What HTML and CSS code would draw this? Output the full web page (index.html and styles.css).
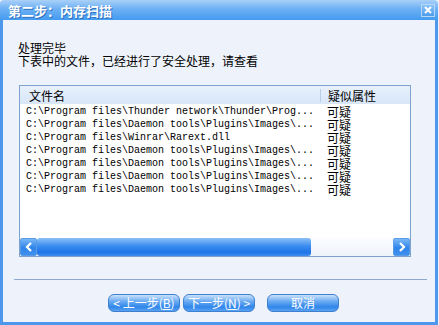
FILE: index.html
```html
<!DOCTYPE html>
<html lang="zh-CN">
<head>
  <meta charset="UTF-8">
  <title>第二步：内存扫描</title>
  <link rel="stylesheet" href="styles.css">
</head>
<body>
  <div class="window">
    <div class="titlebar">
      <span class="title">第二步：内存扫描</span>
      <span class="close-btn">
        <svg width="8" height="8" viewBox="0 0 8 8"><path d="M1 1L7 7M7 1L1 7" stroke="#fff" stroke-width="2"/></svg>
      </span>
    </div>

    <div class="content">
      <div class="message">
        <p>处理完毕</p>
        <p>下表中的文件，已经进行了安全处理，请查看</p>
      </div>

      <!-- 文件列表 -->
      <div class="list">
        <div class="list-head">
          <span class="col-name">文件名</span>
          <span class="col-attr">疑似属性</span>
        </div>
        <div class="rows">
          <div class="row"><span class="path">C:\Program files\Thunder network\Thunder\Prog...</span><span class="attr">可疑</span></div>
          <div class="row"><span class="path">C:\Program files\Daemon tools\Plugins\Images\...</span><span class="attr">可疑</span></div>
          <div class="row"><span class="path">C:\Program files\Winrar\Rarext.dll</span><span class="attr">可疑</span></div>
          <div class="row"><span class="path">C:\Program files\Daemon tools\Plugins\Images\...</span><span class="attr">可疑</span></div>
          <div class="row"><span class="path">C:\Program files\Daemon tools\Plugins\Images\...</span><span class="attr">可疑</span></div>
          <div class="row"><span class="path">C:\Program files\Daemon tools\Plugins\Images\...</span><span class="attr">可疑</span></div>
          <div class="row"><span class="path">C:\Program files\Daemon tools\Plugins\Images\...</span><span class="attr">可疑</span></div>
        </div>
        <div class="hscroll">
          <span class="scroll-btn">
            <svg width="8" height="10" viewBox="0 0 8 10"><path d="M6 1L2 5L6 9" stroke="#fff" stroke-width="2.2" fill="none"/></svg>
          </span>
          <span class="scroll-thumb"></span>
          <span class="scroll-track"></span>
          <span class="scroll-btn">
            <svg width="8" height="10" viewBox="0 0 8 10"><path d="M2 1L6 5L2 9" stroke="#fff" stroke-width="2.2" fill="none"/></svg>
          </span>
        </div>
      </div>

      <div class="separator"></div>

      <div class="buttons">
        <button class="btn">&lt; 上一步(<u>B</u>)</button>
        <button class="btn">下一步(<u>N</u>) &gt;</button>
        <button class="btn btn-cancel">取消</button>
      </div>
    </div>
  </div>
</body>
</html>
```

FILE: styles.css
```css
* {
  margin: 0;
  padding: 0;
  box-sizing: border-box;
}
body {
  font-family: "Noto Sans CJK SC", "Liberation Sans", sans-serif;
  font-size: 12px;
  color: #000;
  background: #eef3fb;
}
.window {
  width: 438px;
  height: 325px;
  display: flex;
  flex-direction: column;
}
/* 标题栏 */
.titlebar {
  height: 20px;
  display: flex;
  align-items: center;
  justify-content: space-between;
  padding: 0 3px 0 8px;
  background: linear-gradient(#a9d0f8, #6cb0f4 45%, #449bf0);
  border-radius: 4px 4px 0 0;
}
.title {
  color: #fff;
  font-weight: bold;
  font-size: 13px;
  line-height: 13px;
  text-shadow: 1px 1px 0 #2f6fbf;
  letter-spacing: 0;
}
.close-btn {
  width: 14px;
  height: 13px;
  display: flex;
  align-items: center;
  justify-content: center;
  background: linear-gradient(#8cc3f6, #4d9bec);
  border: 1px solid #b8d8f8;
}
.content {
  flex: 1;
  border-left: 3px solid #4d97ec;
  border-right: 3px solid #4d97ec;
  border-bottom: 3px solid #4d97ec;
  background: #eef3fb;
  padding: 21px 0 0 15px;
}
.message p {
  line-height: 13px;
}
/* 列表 */
.list {
  margin: 18px 0 0 1px;
  width: 392px;
  height: 172px;
  border: 1px solid #7fa3cc;
  background: #fff;
  display: flex;
  flex-direction: column;
}
.list-head {
  height: 18px;
  display: flex;
  align-items: center;
  background: linear-gradient(#e8f1fc, #d8e6f8);
}
.col-name {
  width: 301px;
  padding-left: 9px;
  border-right: 1px solid #b9cfe9;
  line-height: 13px;
}
.col-attr {
  padding-left: 7px;
  line-height: 13px;
}
.rows {
  flex: 1;
  padding-top: 1px;
}
.row {
  height: 13px;
  display: flex;
  align-items: center;
}
.path {
  width: 301px;
  padding-left: 6px;
  font-family: "Liberation Mono", monospace;
  font-size: 10px;
  white-space: pre;
}
.attr {
  padding-left: 6px;
  line-height: 12px;
}
/* 水平滚动条 */
.hscroll {
  height: 18px;
  display: flex;
  background: #f4f8fd;
}
.scroll-btn {
  width: 17px;
  display: flex;
  align-items: center;
  justify-content: center;
  background: linear-gradient(#7ab8f6, #2f84ea 55%, #3f8fee);
  border: 1px solid #5a9be8;
  border-radius: 2px;
}
.scroll-thumb {
  width: 274px;
  background: linear-gradient(#8cc1f6, #3a8cf0 45%, #1f74e6 80%, #3e8ef0);
  border-radius: 3px;
}
.scroll-track {
  flex: 1;
  background: linear-gradient(#fbfdff, #eef4fc);
}
.separator {
  margin: 22px 0 0 -4px;
  width: 413px;
  height: 1px;
  background: #8eaad2;
}
/* 按钮 */
.buttons {
  margin: 14px 0 0 90px;
  display: flex;
  gap: 3px;
}
.btn {
  width: 72px;
  height: 18px;
  font-family: "Noto Sans CJK SC", "Liberation Sans", sans-serif;
  font-size: 12px;
  color: #fff;
  border: 1px solid #3f7fd0;
  border-radius: 6px;
  background: linear-gradient(#c9e2fb, #6aaaf2 40%, #2f86ea 75%, #5aa3f2);
  line-height: 14px;
}
.btn u {
  text-decoration: underline;
}
.btn-cancel {
  margin-left: 9px;
}
```
